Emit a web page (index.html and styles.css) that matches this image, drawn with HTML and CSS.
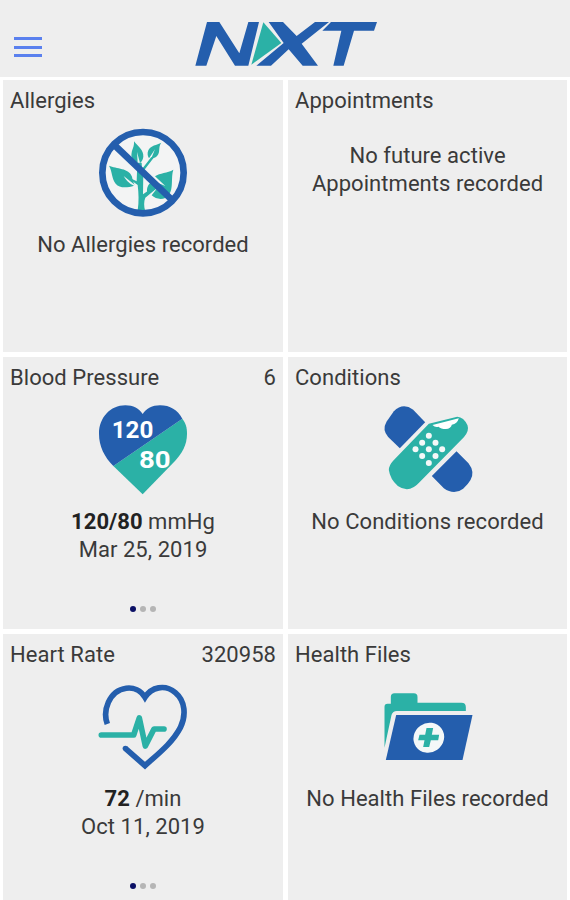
FILE: index.html
```
<!DOCTYPE html>
<html lang="en">
<head>
    <meta charset="UTF-8">
    <meta name="viewport" content="width=device-width, initial-scale=1.0">
    <title>NXT</title>
    <link rel="stylesheet" href="styles.css">
</head>
<body>
    <header class="topbar">
        <button class="menu" aria-label="Menu">
            <span></span>
            <span></span>
            <span></span>
        </button>
        <svg class="logo" viewBox="30 33 549 135">
            <g class="blue">
                <path d="M66 36H103L163 130L190 36H222L190 167H150L94 78L64 167H31Z"/>
                <path d="M251 36H294L335 78L390 36H432L350 101L399 167H353L311 118L258 167H214L296 99Z"/>
                <path d="M438 36H576L567 62H507L476 167H445L469 62H412Z"/>
            </g>
            <path class="teal" d="M235 37L289 99L199 164Z"/>
        </svg>
    </header>

    <main class="tiles">
        <section class="tile">
            <h2>Allergies</h2>
            <svg class="icon" viewBox="27 27 264 264">
                <circle cx="159" cy="158" r="121" fill="#f3f4f4"/>
                <g class="teal">
                    <path d="M143 271C147 245 146 220 143 195L103 166L140 184L142 128H155L156 147L184 111L190 115L160 154L159 223L207 190L212 195L166 233C161 245 162 258 165 271Z"/>
                    <path d="M57 137C79 147 117 143 126 170C128 181 130 187 134 194L101 168C106 178 116 190 132 197C113 203 89 206 77 191C65 177 67 154 57 137Z"/>
                    <path d="M132 64C145 80 161 91 160 110C159 119 155 125 150 129L141 96L143 128C127 124 122 111 125 98C127 87 133 80 132 64Z"/>
                    <path d="M214 68C201 75 181 76 175 91C171 101 173 109 177 115L195 88L184 115C196 116 205 107 207 96C209 84 207 77 214 68Z"/>
                    <path d="M250 149C232 160 210 158 195 169L226 198L212 192L181 189C171 197 169 211 173 222L202 204L185 226C200 240 225 241 237 224C251 204 242 173 250 149Z"/>
                </g>
                <path class="blue-line" stroke-width="20" d="M73 75L245 239"/>
                <circle class="blue-line" stroke-width="20" cx="159" cy="158" r="122"/>
            </svg>
            <p>No Allergies recorded</p>
        </section>

        <section class="tile">
            <h2>Appointments</h2>
            <p class="no-icon">No future active<br>Appointments recorded</p>
        </section>

        <section class="tile">
            <h2>Blood Pressure <span>6</span></h2>
            <svg class="icon" viewBox="27 33 264 264">
                <path class="teal" d="M158 298L70 213L277 71C287 84 291 97 291 116C291 150 276 174 255 198Z"/>
                <path class="blue" d="M70 213C43 185 27 154 27 116C27 68 61 31 106 31C130 31 147 41 158 57C169 41 187 31 210 31C240 31 263 45 277 71Z"/>
                <text class="reading" x="65" y="128" textLength="125" lengthAdjust="spacingAndGlyphs">120</text>
                <text class="reading" x="147" y="219" textLength="95" lengthAdjust="spacingAndGlyphs">80</text>
            </svg>
            <p><b>120/80</b> mmHg<br>Mar 25, 2019</p>
            <div class="dots"><i class="on"></i><i></i><i></i></div>
        </section>

        <section class="tile">
            <h2>Conditions</h2>
            <svg class="icon" viewBox="25.5 33 264 264">
                <path class="blue" d="M73 160L38 126Q19 104 33 80L55 49Q82 22 113 44L149 82Z"/>
                <path class="blue" d="M243 169L279 205Q299 231 285 255Q277 269 263 281Q236 302 205 280L169 243Z"/>
                <path class="teal" d="M160 86L245 65Q265 66 276 91Q282 108 265 127L132 262Q101 297 67 273Q44 253 40 225Q40 211 53 197Z"/>
                <path d="M171 90L250 70Q245 88 229 89Q226 101 211 102Q196 102 189 95Q179 98 171 90Z" fill="#fff"/>
                <g fill="#f4f8f8">
                    <circle cx="160" cy="122" r="9"/>
                    <circle cx="140" cy="143" r="9"/>
                    <circle cx="180" cy="143" r="9"/>
                    <circle cx="120" cy="163" r="9"/>
                    <circle cx="160" cy="163" r="9"/>
                    <circle cx="200" cy="163" r="9"/>
                    <circle cx="140" cy="183" r="9"/>
                    <circle cx="180" cy="183" r="9"/>
                    <circle cx="160" cy="204" r="9"/>
                </g>
            </svg>
            <p>No Conditions recorded</p>
        </section>

        <section class="tile">
            <h2>Heart Rate <span>320958</span></h2>
            <svg class="icon" viewBox="27 24 264 264">
                <path class="blue-line" stroke-width="17" d="M52 147C45 128 46 102 55 82C78 32 139 24 165 67C184 37 224 26 256 53C286 78 289 121 271 158C247 204 204 237 165 272L106 220"/>
                <circle class="blue" cx="106" cy="220" r="8"/>
                <path class="teal-line" stroke-width="17" d="M34 180H131L148 129L166 213L192 162H222"/>
            </svg>
            <p><b>72</b> /min<br>Oct 11, 2019</p>
            <div class="dots"><i class="on"></i><i></i><i></i></div>
        </section>

        <section class="tile">
            <h2>Health Files</h2>
            <svg class="icon" viewBox="25.5 24 264 264">
                <path class="teal" d="M27 218V95Q27 86 36 86H46V66Q46 55 57 55H115Q126 55 126 66V83H258Q271 83 271 96V108H64Q52 108 48 120Z"/>
                <path class="blue" d="M62 120H291L261 255H31Z"/>
                <ellipse cx="160" cy="188" rx="47" ry="44" transform="rotate(-35 160 188)" fill="#f4f8f8"/>
                <path class="teal" d="M153 159H173L169 179H191L188 196H166L161 216H143L147 196H128L132 179H149Z"/>
            </svg>
            <p>No Health Files recorded</p>
        </section>
    </main>
</body>
</html>
```
FILE: styles.css
```
* {
    box-sizing: border-box;
}

body {
    margin: 0;
    height: 900px;
    overflow: hidden;
    background: #fff;
    color: #3a3a3a;
    font-family: Roboto, sans-serif;
    font-size: 22px;
    line-height: 28px;
    letter-spacing: 0.05px;
}

.topbar {
    display: grid;
    grid-template-columns: 181px 1fr;
    align-items: start;
    height: 77px;
    padding: 21px 14px 0;
    background: #eee;
}

.menu {
    display: flex;
    flex-direction: column;
    gap: 5.5px;
    width: 28px;
    margin-top: 16px;
    padding: 0;
    border: 0;
    background: none;
}

.menu span {
    width: 28px;
    height: 3px;
    background: #5a80ee;
}

.logo {
    width: 183px;
    height: 45px;
}

/* 2 columns of tiles, the last row runs off the screen */
.tiles {
    display: grid;
    grid-template-columns: 280px 279px;
    grid-auto-rows: 272px;
    gap: 5px;
    padding: 3px;
}

.tile {
    display: flex;
    flex-direction: column;
    align-items: center;
    padding: 7px 7px 0;
    background: #eee;
}

.tile h2 {
    display: flex;
    justify-content: space-between;
    width: 100%;
    margin: 0;
    font-size: 22px;
    font-weight: 400;
}

.tile p {
    margin: 14px 0 0;
    text-align: center;
}

.tile .no-icon {
    margin-top: 27px;
}

.tile b {
    color: #222;
    font-weight: 700;
}

.icon {
    width: 88px;
    height: 88px;
    margin-top: 14px;
    overflow: visible;
}

.blue {
    fill: #245ead;
}

.teal {
    fill: #2bb1a6;
}

.blue-line {
    fill: none;
    stroke: #245ead;
}

.teal-line {
    fill: none;
    stroke: #2bb1a6;
    stroke-linecap: round;
    stroke-linejoin: round;
}

.reading {
    fill: #fff;
    font-size: 72px;
    font-weight: 700;
    letter-spacing: 0;
}

.dots {
    display: flex;
    gap: 4px;
    margin-top: 41.5px;
}

.dots i {
    width: 6px;
    height: 6px;
    border-radius: 50%;
    background: #b5b5b5;
}

.dots .on {
    background: #0b1065;
}
```
